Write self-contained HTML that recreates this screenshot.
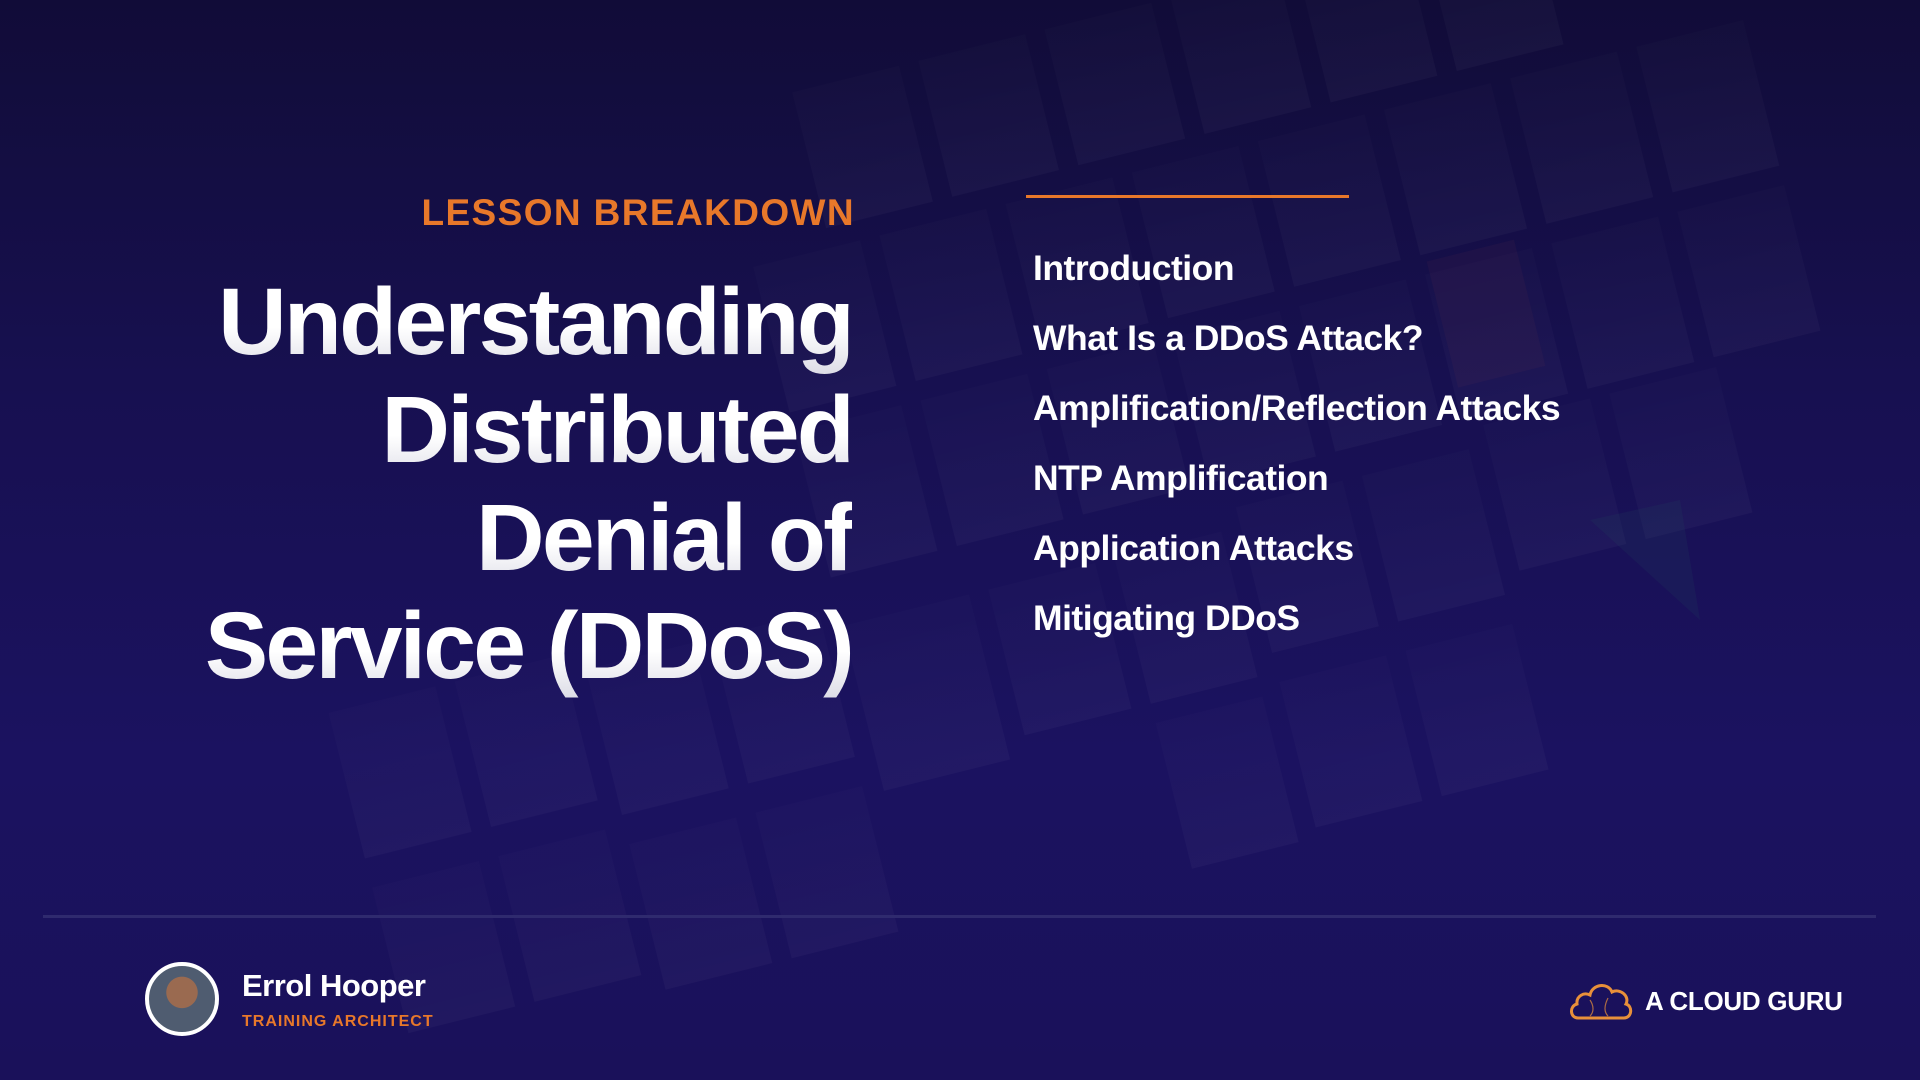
<!DOCTYPE html>
<html><head><meta charset="utf-8"><style>
html,body{margin:0;padding:0}
body{width:1920px;height:1080px;position:relative;overflow:hidden;font-family:"Liberation Sans",sans-serif;
background:linear-gradient(180deg,#110c38 0%,#171050 35%,#1b1260 70%,#1a115a 100%);}
.tiles{position:absolute;left:0;top:0;width:1920px;height:1080px;}
.lb{position:absolute;right:1065px;top:192px;color:#e8782a;font-weight:bold;font-size:37px;letter-spacing:1.4px;white-space:nowrap}
.title{position:absolute;right:1068px;top:268px;text-align:right;font-weight:bold;font-size:95px;line-height:108px;letter-spacing:-2.8px;white-space:nowrap;}
.tl{background:linear-gradient(180deg,#ffffff 55%,#dcdce6 100%);-webkit-background-clip:text;background-clip:text;color:transparent}
.oline{position:absolute;left:1026px;top:195px;width:323px;height:3px;background:#e8782a}
.list{position:absolute;left:1033px;top:244px;color:#fff;font-weight:bold;font-size:35.5px;letter-spacing:-0.5px}
.list div{height:70px;line-height:48px;white-space:nowrap}
.hr{position:absolute;left:43px;top:915px;width:1833px;height:3px;background:#2f2a6e}
.av{position:absolute;left:145px;top:962px;width:66px;height:66px;border-radius:50%;border:4px solid #fff;background:radial-gradient(circle at 50% 40%,#9a6a50 0 30%,#4f5c70 31% 100%);overflow:hidden}
.name{position:absolute;left:242px;top:968px;color:#fff;font-weight:bold;font-size:31px;letter-spacing:-0.5px}
.role{position:absolute;left:242px;top:1013px;color:#e8782a;font-weight:bold;font-size:16px;letter-spacing:1px}
.brand{position:absolute;left:1645px;top:986px;color:#fff;font-weight:bold;font-size:26px;letter-spacing:-0.3px}
</style></head><body>
<svg class="tiles" viewBox="0 0 1920 1080">
<defs><linearGradient id="fade" x1="0" y1="0" x2="0" y2="1"><stop offset="0" stop-color="#fff" stop-opacity="0.012"/><stop offset="1" stop-color="#fff" stop-opacity="0.03"/></linearGradient></defs>
<g transform="rotate(-14 1100 500)" fill="url(#fade)">
<rect x="300" y="520" width="110" height="150"/><rect x="430" y="520" width="110" height="150"/><rect x="560" y="540" width="110" height="150"/><rect x="690" y="540" width="110" height="150"/><rect x="820" y="560" width="130" height="170"/><rect x="970" y="560" width="110" height="150"/><rect x="1100" y="560" width="110" height="150"/><rect x="1230" y="540" width="110" height="150"/><rect x="1360" y="540" width="110" height="150"/><rect x="1490" y="520" width="110" height="150"/><rect x="1620" y="520" width="110" height="150"/>
<rect x="820" y="360" width="110" height="150"/><rect x="950" y="360" width="110" height="150"/><rect x="1080" y="360" width="110" height="150"/><rect x="1210" y="360" width="110" height="150"/><rect x="1340" y="360" width="110" height="150"/><rect x="1470" y="360" width="110" height="150"/><rect x="1600" y="360" width="110" height="150"/><rect x="1730" y="360" width="110" height="150"/>
<rect x="820" y="190" width="110" height="150"/><rect x="950" y="190" width="110" height="150"/><rect x="1080" y="190" width="110" height="150"/><rect x="1210" y="190" width="110" height="150"/><rect x="1340" y="190" width="110" height="150"/><rect x="1470" y="190" width="110" height="150"/><rect x="1600" y="190" width="110" height="150"/><rect x="1730" y="190" width="110" height="150"/>
<rect x="900" y="30" width="110" height="140"/><rect x="1030" y="30" width="110" height="140"/><rect x="1160" y="30" width="110" height="140"/><rect x="1290" y="30" width="110" height="140"/><rect x="1420" y="30" width="110" height="140"/><rect x="1550" y="30" width="110" height="140"/>
<rect x="300" y="700" width="110" height="150"/><rect x="430" y="700" width="110" height="150"/><rect x="560" y="720" width="110" height="150"/><rect x="690" y="720" width="110" height="150"/><rect x="1100" y="730" width="110" height="150"/><rect x="1230" y="720" width="110" height="150"/><rect x="1360" y="720" width="110" height="150"/>
</g>
<rect x="1440" y="250" width="90" height="130" fill="#8a3a4a" opacity="0.08" transform="rotate(-14 1480 310)"/>
<polygon points="1590,520 1680,500 1700,620" fill="#2a7060" opacity="0.1"/>
</svg>
<div class="lb">LESSON BREAKDOWN</div>
<div class="title"><span class="tl">Understanding<br>Distributed<br>Denial of<br>Service (DDoS)</span></div>
<div class="oline"></div>
<div class="list">
<div>Introduction</div>
<div>What Is a DDoS Attack?</div>
<div>Amplification/Reflection Attacks</div>
<div>NTP Amplification</div>
<div>Application Attacks</div>
<div>Mitigating DDoS</div>
</div>
<div class="hr"></div>
<div class="av"></div>
<div class="name">Errol Hooper</div>
<div class="role">TRAINING ARCHITECT</div>
<svg style="position:absolute;left:1568px;top:978px" width="66" height="44" viewBox="0 0 66 44">
<path d="M10 40 C2 40 1 28 9 26 C8 18 16 14 22 17 C24 6 40 4 44 14 C52 10 62 18 58 26 C65 28 64 40 56 40 Z" fill="none" stroke="#e8903a" stroke-width="3"/>
<path d="M22 22 C26 28 26 34 22 38 M40 20 C36 28 36 34 40 38" fill="none" stroke="#e8903a" stroke-width="1.2" opacity="0.7"/>
</svg>
<div class="brand">A CLOUD GURU</div>
</body></html>
